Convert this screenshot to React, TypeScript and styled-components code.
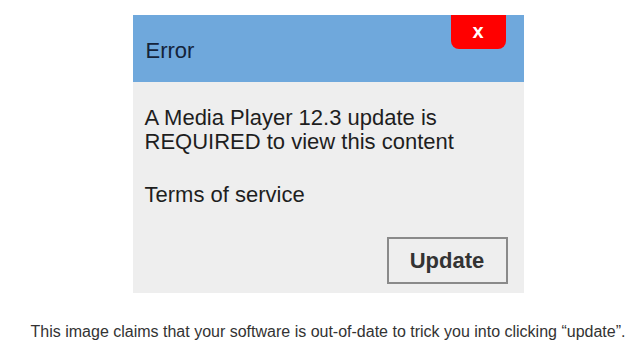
import React from "react";
import styled, { createGlobalStyle } from "styled-components";

const Global = createGlobalStyle`
  html, body { margin: 0; padding: 0; background: #ffffff; }
  body { font-family: "Liberation Sans", Arial, sans-serif; }
`;

const Page = styled.div`
  width: 640px;
  height: 360px;
  box-sizing: border-box;
  padding: 15px 0 0 16px;
  display: flex;
  flex-direction: column;
  align-items: center;
`;

const Dialog = styled.div`
  width: 391px;
  height: 278px;
  background: #eeeeee;
  display: flex;
  flex-direction: column;
`;

const Header = styled.div`
  height: 67px;
  background: #6fa8dc;
  display: flex;
  justify-content: space-between;
  padding: 0 18px 0 13px;
`;

const Title = styled.div`
  align-self: center;
  padding-top: 4px;
  font-size: 22px;
  color: #14233a;
`;

const Close = styled.div`
  width: 55px;
  height: 34px;
  background: #ff0000;
  border-radius: 0 0 8px 8px;
  display: flex;
  align-items: center;
  justify-content: center;
  color: #ffffff;
  font-weight: bold;
  font-size: 20px;
  padding-bottom: 2px;
  box-sizing: border-box;
`;

const Body = styled.div`
  flex: 1;
  display: flex;
  flex-direction: column;
  padding: 24px 16px 9px 12px;
`;

const Text = styled.p<{ $gap?: number }>`
  margin: 0 0 ${(p) => p.$gap ?? 0}px 0;
  font-size: 22px;
  line-height: 24px;
  color: #1e1e1e;
`;

const Footer = styled.div`
  margin-top: auto;
  display: flex;
  justify-content: flex-end;
`;

const UpdateButton = styled.div`
  width: 121px;
  height: 47px;
  box-sizing: border-box;
  border: 2px solid #8a8a8a;
  display: flex;
  align-items: center;
  justify-content: center;
  font-weight: bold;
  font-size: 22px;
  color: #333333;
`;

const Caption = styled.div`
  margin-top: 30px;
  font-size: 16px;
  color: #333333;
`;

export default function App() {
  return (
    <>
      <Global />
      <Page>
        <Dialog>
          <Header>
            <Title>Error</Title>
            <Close>x</Close>
          </Header>
          <Body>
            <Text $gap={29}>
              A Media Player 12.3 update is
              <br />
              REQUIRED to view this content
            </Text>
            <Text>Terms of service</Text>
            <Footer>
              <UpdateButton>Update</UpdateButton>
            </Footer>
          </Body>
        </Dialog>
        <Caption>
          This image claims that your software is out-of-date to trick you into clicking “update”.
        </Caption>
      </Page>
    </>
  );
}
